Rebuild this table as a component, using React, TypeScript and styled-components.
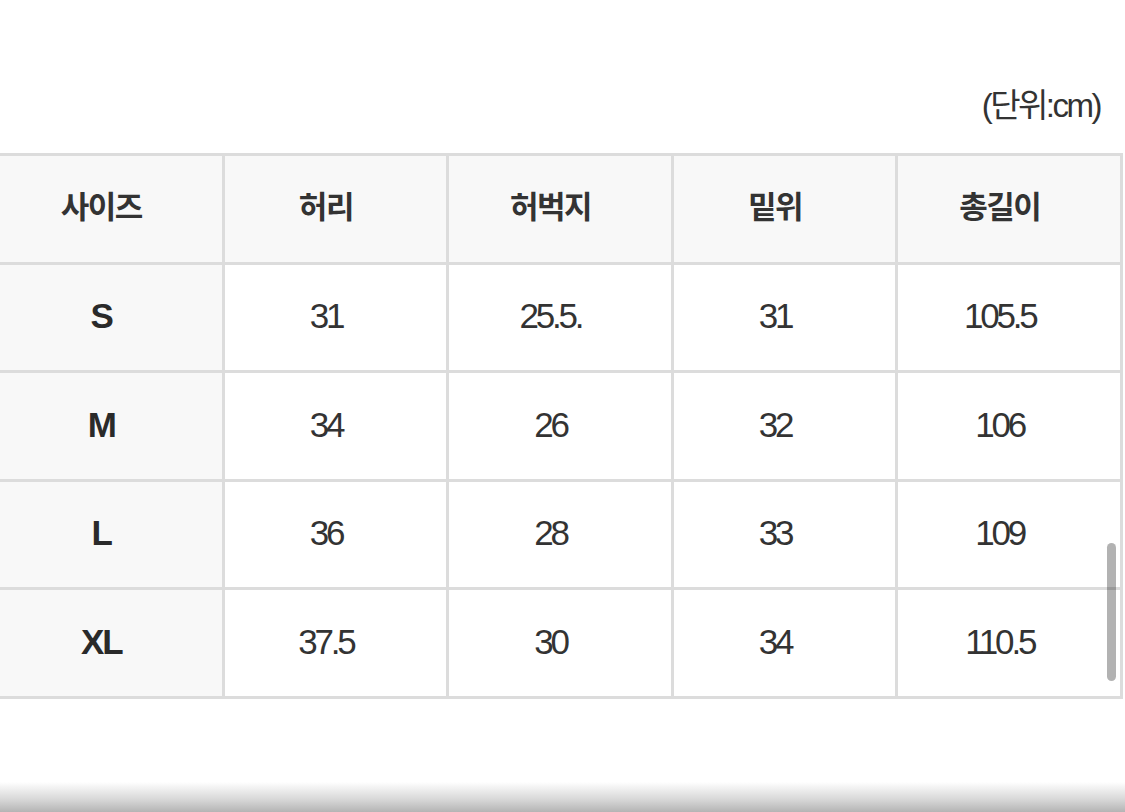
import styled, { createGlobalStyle } from "styled-components";

const GlobalStyle = createGlobalStyle`
  html, body {
    margin: 0;
    padding: 0;
    background: #fff;
    overflow: hidden;
  }
`;

const Page = styled.div`
  position: relative;
  height: 812px;
  display: flex;
  flex-direction: column;
  overflow: hidden;
  font-family: "Liberation Sans", "Noto Sans CJK KR", sans-serif;
  color: #333;
`;

const Unit = styled.div`
  padding: 81px 25px 22px 0;
  line-height: 50px;
  text-align: right;
  font-size: 33px;
  letter-spacing: -2.5px;
  color: #333;
`;

const Table = styled.table`
  border-collapse: collapse;
  margin-left: -3px;
  width: 1126px;
  table-layout: fixed;
`;

const Row = styled.tr`
  height: 108.5px;
`;

const Cell = styled.td<{ $head?: boolean; $shaded?: boolean }>`
  border: 3px solid #dcdcdc;
  text-align: center;
  vertical-align: middle;
  padding: 0 19px ${(p) => (p.$head ? "8px" : "2px")} 0;
  background: ${(p) => (p.$shaded ? "#f8f8f8" : "#fff")};
  font-family: ${(p) =>
    p.$head
      ? `"Noto Sans CJK KR", "Liberation Sans", sans-serif`
      : `"Liberation Sans", "Noto Sans CJK KR", sans-serif`};
  font-size: ${(p) => (p.$head ? "31px" : "35px")};
  font-weight: ${(p) => (p.$head ? 700 : 400)};
  letter-spacing: ${(p) => (p.$head ? "-1.5px" : "-3.2px")};
  color: #333;
`;

const SizeCell = styled(Cell)`
  font-weight: 700;
  letter-spacing: -2px;
  color: #2a2a2a;
`;

const BottomShade = styled.div`
  margin-top: auto;
  height: 30px;
  background: linear-gradient(to bottom, rgba(255, 255, 255, 0), #d6d6d6 60%, #b4b4b4);
`;

const Scrollbar = styled.div`
  position: absolute;
  left: 1107px;
  top: 543px;
  width: 9px;
  height: 138px;
  border-radius: 5px;
  background: rgba(0, 0, 0, 0.3);
`;

const headers = ["사이즈", "허리", "허벅지", "밑위", "총길이"];

const rows = [
  ["S", "31", "25.5.", "31", "105.5"],
  ["M", "34", "26", "32", "106"],
  ["L", "36", "28", "33", "109"],
  ["XL", "37.5", "30", "34", "110.5"],
];

export default function App() {
  return (
    <>
      <GlobalStyle />
      <Page>
        <Unit>(단위:cm)</Unit>
        <Table>
          <tbody>
            <Row>
              {headers.map((h) => (
                <Cell key={h} $head $shaded>
                  {h}
                </Cell>
              ))}
            </Row>
            {rows.map((r) => (
              <Row key={r[0]}>
                <SizeCell $shaded>{r[0]}</SizeCell>
                {r.slice(1).map((v, i) => (
                  <Cell key={i}>{v}</Cell>
                ))}
              </Row>
            ))}
          </tbody>
        </Table>
        <BottomShade />
        <Scrollbar />
      </Page>
    </>
  );
}
